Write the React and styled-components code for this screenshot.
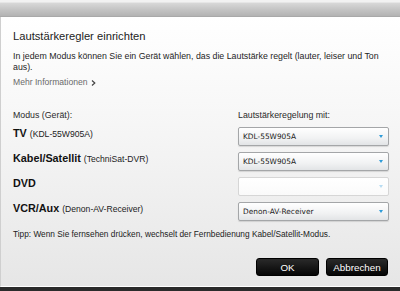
import React from "react";
import styled, { createGlobalStyle } from "styled-components";

const Global = createGlobalStyle`
  html, body { margin: 0; padding: 0; background: #2b2b2b; }
  body { font-family: "Liberation Sans", Arial, sans-serif; }
`;

const Screen = styled.div`
  width: 400px;
  height: 291px;
  display: flex;
  flex-direction: column;
  background: #2b2b2b;
  overflow: hidden;
`;

const TopStrip = styled.div`
  height: 2px;
  background: #f2f2f2;
  border-bottom: 1px solid #e6e6e6;
`;

const TitleBar = styled.div`
  height: 13px;
  background: linear-gradient(#d8d8d8, #c4c4c4 50%, #b3b3b3);
  border-bottom: 1px solid #a9a9a9;
`;

const Dialog = styled.div`
  height: 269px;
  background: linear-gradient(#ffffff, #f6f6f6 40%, #e6e6e6);
  border-left: 1px solid #cfcfcf;
  border-bottom: 1px solid #ffffff;
  padding: 0 12px;
  display: flex;
  flex-direction: column;
  color: #1e1e1e;
`;

const Title = styled.h1`
  margin: 12px 0 0 0;
  font-size: 11.2px;
  font-weight: normal;
  line-height: 14px;
  color: #1c1c1c;
`;

const Intro = styled.p`
  margin: 8px 0 0 0;
  font-size: 8.8px;
  line-height: 11px;
  width: 372px;
`;

const More = styled.a`
  margin-top: 4px;
  font-size: 8.6px;
  line-height: 11px;
  color: #6a6a6a;
  display: flex;
  align-items: center;
  gap: 3px;
`;

const Table = styled.div`
  margin-top: 22px;
  display: grid;
  grid-template-columns: 225px 151px;
  grid-auto-rows: 19px;
  grid-template-rows: 11px;
  row-gap: 6px;
`;

const HeadLabel = styled.div`
  font-size: 8.8px;
  line-height: 11px;
  color: #2a2a2a;
`;

const Device = styled.div`
  display: flex;
  align-items: baseline;
  align-self: start;
  gap: 3px;
  line-height: 11px;
  padding-top: 1px;
`;

const Mode = styled.span`
  font-size: 10.8px;
  font-weight: bold;
  color: #111;
`;

const Model = styled.span`
  font-size: 8.6px;
  color: #222;
`;

const Select = styled.div`
  box-sizing: border-box;
  border: 1px solid ${(p) => (p.$disabled ? "#d6d6d6" : "#a4a6a8")};
  border-radius: 2px;
  background: ${(p) =>
    p.$disabled
      ? "linear-gradient(#ffffff, #fafafa)"
      : "linear-gradient(#ffffff, #f1f2f3 60%, #e2e4e6)"};
  box-shadow: ${(p) => (p.$disabled ? "none" : "0 1px 1px rgba(0,0,0,0.12)")};
  display: flex;
  align-items: center;
  justify-content: space-between;
  padding: 0 5px 0 4px;
  font-family: "DejaVu Sans", Verdana, sans-serif;
  font-size: 7.4px;
  color: #222;
`;

const Arrow = styled.span`
  width: 0;
  height: 0;
  border-left: 2.5px solid transparent;
  border-right: 2.5px solid transparent;
  border-top: 3px solid ${(p) => (p.$disabled ? "#b8dcf2" : "#2e9bd8")};
`;

const Tip = styled.div`
  margin-top: 8px;
  font-size: 8.3px;
  line-height: 11px;
  color: #222;
`;

const Buttons = styled.div`
  margin-top: 18px;
  display: flex;
  justify-content: flex-end;
  gap: 7px;
`;

const Button = styled.button`
  width: ${(p) => p.$w}px;
  height: 18px;
  border: 1px solid #000;
  border-radius: 3px;
  background: linear-gradient(#2a2a2a, #050505);
  color: #fff;
  font-family: "Liberation Sans", Arial, sans-serif;
  font-size: 9.8px;
  padding: 0;
`;

const rows = [
  { mode: "TV", model: "(KDL-55W905A)", value: "KDL-55W905A" },
  { mode: "Kabel/Satellit", model: "(TechniSat-DVR)", value: "KDL-55W905A" },
  { mode: "DVD", model: "", value: "", disabled: true },
  { mode: "VCR/Aux", model: "(Denon-AV-Receiver)", value: "Denon-AV-Receiver" },
];

export default function App() {
  return (
    <Screen>
      <Global />
      <TopStrip />
      <TitleBar />
      <Dialog>
        <Title>Lautstärkeregler einrichten</Title>
        <Intro>
          In jedem Modus können Sie ein Gerät wählen, das die Lautstärke regelt (lauter, leiser und Ton aus).
        </Intro>
        <More>
          Mehr Informationen
          <svg width="5" height="6" viewBox="0 0 5 6">
            <path d="M1 0.5 L3.8 3 L1 5.5" stroke="#444" strokeWidth="1.2" fill="none" />
          </svg>
        </More>
        <Table>
          <HeadLabel>Modus (Gerät):</HeadLabel>
          <HeadLabel>Lautstärkeregelung mit:</HeadLabel>
          {rows.map((r) => (
            <React.Fragment key={r.mode}>
              <Device>
                <Mode>{r.mode}</Mode>
                {r.model && <Model>{r.model}</Model>}
              </Device>
              <Select $disabled={r.disabled}>
                <span>{r.value}</span>
                <Arrow $disabled={r.disabled} />
              </Select>
            </React.Fragment>
          ))}
        </Table>
        <Tip>Tipp: Wenn Sie fernsehen drücken, wechselt der Fernbedienung Kabel/Satellit-Modus.</Tip>
        <Buttons>
          <Button $w={63}>OK</Button>
          <Button $w={62}>Abbrechen</Button>
        </Buttons>
      </Dialog>
    </Screen>
  );
}
